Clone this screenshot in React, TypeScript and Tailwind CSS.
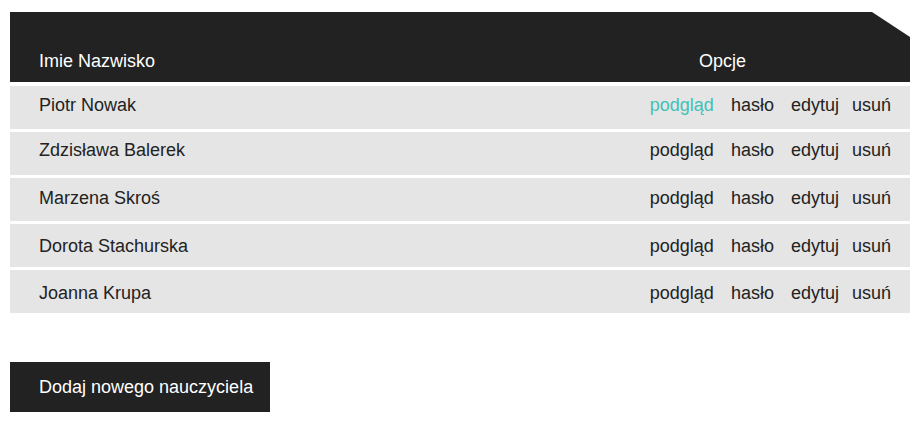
const teachers = [
  { name: "Piotr Nowak", pad: "pt-[9px]" },
  { name: "Zdzisława Balerek", pad: "pt-[8px]" },
  { name: "Marzena Skroś", pad: "pt-[10px]" },
  { name: "Dorota Stachurska", pad: "pt-[12px]" },
  { name: "Joanna Krupa", pad: "pt-[13px]" },
];

// spacing between the option links is uneven in the design
const options = [
  { label: "podgląd", space: "" },
  { label: "hasło", space: "ml-[17px]" },
  { label: "edytuj", space: "ml-[17px]" },
  { label: "usuń", space: "ml-[13px]" },
];

export default function App() {
  return (
    <div className="min-h-screen bg-white pl-[10px] pt-[12px] font-['Liberation_Sans',Arial,sans-serif] text-[18px] leading-[20px] text-[#222]">
      <div className="w-[900px]">
        <div className="flex h-[70px] items-end justify-between bg-[#222] pb-[11px] pl-[29px] pr-[164px] text-white [clip-path:polygon(0_0,calc(100%-38px)_0,100%_25px,100%_100%,0_100%)]">
          <span>Imie Nazwisko</span>
          <span>Opcje</span>
        </div>

        <div className="mt-[4px] flex flex-col gap-[3px]">
          {teachers.map((t, i) => (
            <div
              key={t.name}
              className={`flex h-[43px] items-start justify-between bg-[#e5e5e5] pl-[29px] pr-[19px] ${t.pad}`}
            >
              <span>{t.name}</span>
              <div className="flex">
                {options.map((opt, j) => (
                  <a
                    key={opt.label}
                    href="#"
                    className={`${opt.space} ${i === 0 && j === 0 ? "text-[#3fc1b8]" : "text-[#222]"}`}
                  >
                    {opt.label}
                  </a>
                ))}
              </div>
            </div>
          ))}
        </div>

        <button className="mt-[49px] flex h-[50px] w-[260px] items-center bg-[#222] pl-[29px] text-white">
          Dodaj nowego nauczyciela
        </button>
      </div>
    </div>
  );
}
